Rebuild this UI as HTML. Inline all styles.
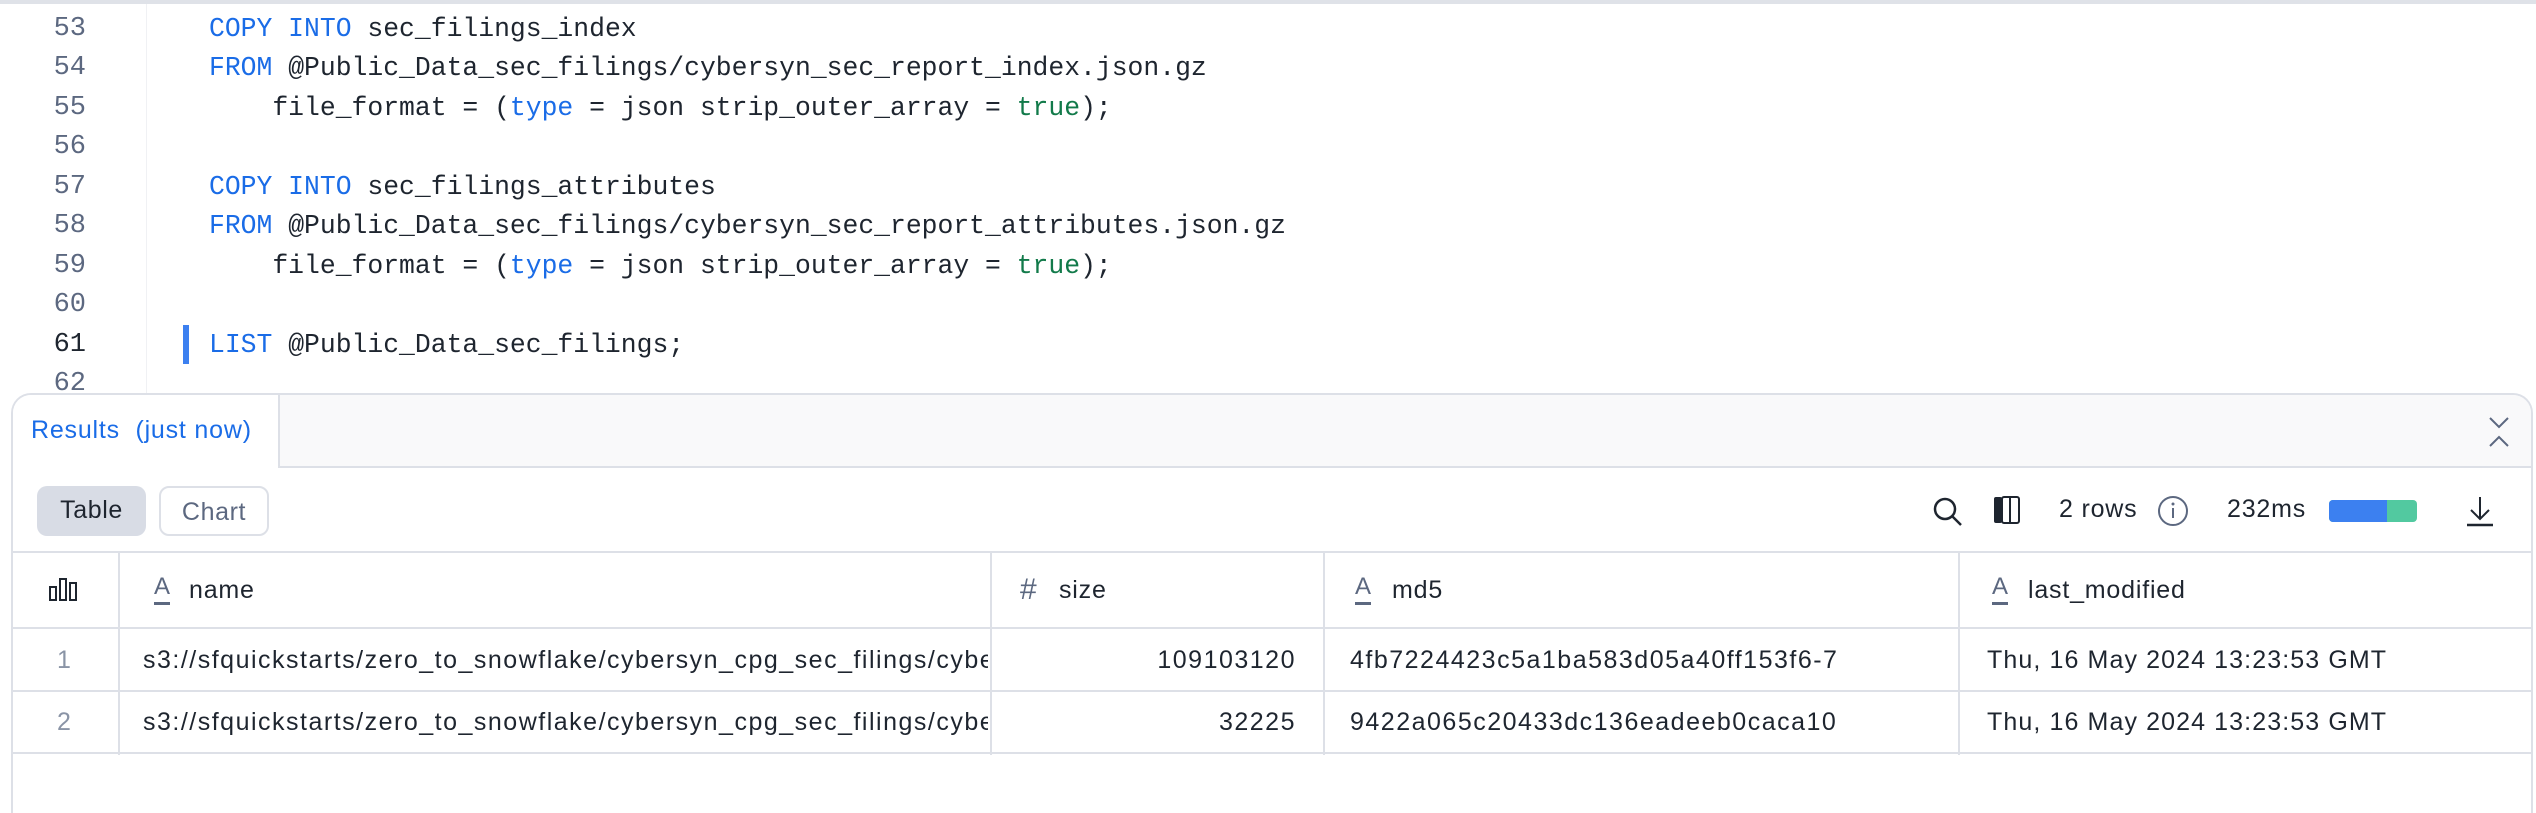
<!DOCTYPE html>
<html><head><meta charset="utf-8"><style>
*{margin:0;padding:0;box-sizing:border-box}
body{width:2536px;height:790px;background:#fff;position:relative;overflow:hidden;font-family:"Liberation Sans",sans-serif;color:#1e252f}
.top{position:absolute;left:0;top:0;width:2536px;height:4px;background:#dfe2e8}
.gut{position:absolute;left:146px;top:4px;width:1px;height:390px;background:#f0f1f4}
.ln{position:absolute;left:0;width:86px;text-align:right;font:27px "Liberation Mono",monospace;color:#5c6880}
.code{position:absolute;left:209px;font:26.4px "Liberation Mono",monospace;color:#1e252f;white-space:pre}
.k{color:#1a6ce7}.g{color:#127a4a}
.bar{position:absolute;left:183px;top:325px;width:6px;height:39px;background:#3c80f0}
.panel{position:absolute;left:11px;top:393px;width:2522px;height:420px;border:2px solid #dde0e7;border-bottom:none;border-radius:20px 20px 0 0;overflow:hidden}
.hdr{position:absolute;left:0;top:0;right:0;height:73px;background:#f9f9fa;border-bottom:2px solid #dde0e7}
.tab{position:absolute;left:0;top:0;width:267px;height:73px;background:#fff;border-right:2px solid #dde0e7;font-size:25px;letter-spacing:0.8px;color:#1a6ce7;padding:21px 0 0 18px;white-space:pre}
.btn{position:absolute;top:91px;height:50px;border-radius:10px;font-size:25px;letter-spacing:0.6px;text-align:center;line-height:48px}
.t{position:absolute;font-size:25px;letter-spacing:0.8px;white-space:pre}
.d{letter-spacing:1.5px}
.hl{position:absolute;left:0;right:0;height:2px;background:#dde0e7}
.vl{position:absolute;top:156px;height:204px;width:2px;background:#dde0e7}
.A{position:absolute;font-size:24px;color:#5c6880;border-bottom:3px solid #5c6880;line-height:24px;height:30px}
</style></head><body>
<div class="top"></div><div class="gut"></div>
<div class="ln" style="top:14px">53</div><div class="code" style="top:14px"><span class="k">COPY INTO</span> sec_filings_index</div>
<div class="ln" style="top:53px">54</div><div class="code" style="top:53px"><span class="k">FROM</span> @Public_Data_sec_filings/cybersyn_sec_report_index.json.gz</div>
<div class="ln" style="top:93px">55</div><div class="code" style="top:93px">    file_format = (<span class="k">type</span> = json strip_outer_array = <span class="g">true</span>);</div>
<div class="ln" style="top:132px">56</div>
<div class="ln" style="top:172px">57</div><div class="code" style="top:172px"><span class="k">COPY INTO</span> sec_filings_attributes</div>
<div class="ln" style="top:211px">58</div><div class="code" style="top:211px"><span class="k">FROM</span> @Public_Data_sec_filings/cybersyn_sec_report_attributes.json.gz</div>
<div class="ln" style="top:251px">59</div><div class="code" style="top:251px">    file_format = (<span class="k">type</span> = json strip_outer_array = <span class="g">true</span>);</div>
<div class="ln" style="top:290px">60</div>
<div class="ln" style="top:330px;color:#1e252f">61</div><div class="code" style="top:330px"><span class="k">LIST</span> @Public_Data_sec_filings;</div>
<div class="ln" style="top:369px">62</div>
<div class="bar"></div>
<div class="panel">
<div class="hdr"><div class="tab">Results  (just now)</div>
<svg style="position:absolute;right:20px;top:20px" width="24" height="34" viewBox="0 0 24 34"><path d="M3 3l9 9 9-9M3 31l9-9 9 9" fill="none" stroke="#5c6880" stroke-width="2"/></svg></div>
<div class="btn" style="left:24px;width:109px;background:#d8dce5;color:#1e252f">Table</div>
<div class="btn" style="left:146px;width:110px;border:2px solid #dde0e7;color:#5c6880">Chart</div>
<svg style="position:absolute;left:1918px;top:100px" width="34" height="34" viewBox="0 0 34 34"><circle cx="14" cy="14" r="10" fill="none" stroke="#1e252f" stroke-width="2.5"/><path d="M21 21l9 9" stroke="#1e252f" stroke-width="2.5"/></svg>
<svg style="position:absolute;left:1980px;top:101px" width="28" height="30" viewBox="0 0 28 30"><rect x="1" y="1" width="8" height="26" rx="2" fill="#1e252f"/><rect x="9" y="1" width="17" height="26" rx="2" fill="none" stroke="#1e252f" stroke-width="2"/><path d="M17 1v26" stroke="#1e252f" stroke-width="2"/></svg>
<div class="t" style="left:2046px;top:100px">2 rows</div>
<svg style="position:absolute;left:2144px;top:100px" width="32" height="32" viewBox="0 0 32 32"><circle cx="16" cy="16" r="14" fill="none" stroke="#5c6880" stroke-width="2"/><path d="M16 13v10" stroke="#5c6880" stroke-width="2"/><circle cx="16" cy="9" r="1.5" fill="#5c6880"/></svg>
<div class="t" style="left:2214px;top:100px">232ms</div>
<div style="position:absolute;left:2316px;top:105px;width:88px;height:22px;border-radius:4px;background:#52c9a0;overflow:hidden"><div style="width:58px;height:22px;background:#3c80f0"></div></div>
<svg style="position:absolute;left:2452px;top:100px" width="30" height="32" viewBox="0 0 30 32"><path d="M15 2v22M6 15l9 9 9-9" fill="none" stroke="#1e252f" stroke-width="2"/><path d="M2 30h26" stroke="#1e252f" stroke-width="2.5"/></svg>
<div class="hl" style="top:156px"></div><div class="hl" style="top:232px"></div><div class="hl" style="top:295px"></div><div class="hl" style="top:357px"></div>
<div class="vl" style="left:105px"></div><div class="vl" style="left:977px"></div><div class="vl" style="left:1310px"></div><div class="vl" style="left:1945px"></div>
<svg style="position:absolute;left:36px;top:182px" width="30" height="24" viewBox="0 0 30 24"><rect x="1" y="10" width="6" height="13" fill="none" stroke="#1e252f" stroke-width="2"/><rect x="11" y="2" width="6" height="21" fill="none" stroke="#1e252f" stroke-width="2"/><rect x="21" y="6" width="6" height="17" fill="none" stroke="#1e252f" stroke-width="2"/></svg>
<div class="A" style="left:141px;top:180px">A</div><div class="t" style="left:176px;top:181px">name</div>
<div class="t" style="left:1007px;top:178px;color:#5c6880;font-size:30px">#</div><div class="t" style="left:1046px;top:181px">size</div>
<div class="A" style="left:1342px;top:180px">A</div><div class="t" style="left:1379px;top:181px">md5</div>
<div class="A" style="left:1979px;top:180px">A</div><div class="t" style="left:2015px;top:181px">last_modified</div>
<div class="t" style="left:44px;top:251px;color:#8a94a6">1</div>
<div class="t d" style="left:130px;top:251px;width:845px;overflow:hidden">s3://sfquickstarts/zero_to_snowflake/cybersyn_cpg_sec_filings/cybersyn_sec_report_index.json.gz</div>
<div class="t d" style="left:980px;top:251px;width:303px;text-align:right">109103120</div>
<div class="t d" style="left:1337px;top:251px">4fb7224423c5a1ba583d05a40ff153f6-7</div>
<div class="t d" style="left:1974px;top:251px;letter-spacing:1.1px">Thu, 16 May 2024 13:23:53 GMT</div>
<div class="t" style="left:44px;top:313px;color:#8a94a6">2</div>
<div class="t d" style="left:130px;top:313px;width:845px;overflow:hidden">s3://sfquickstarts/zero_to_snowflake/cybersyn_cpg_sec_filings/cybersyn_sec_report_attributes.json.gz</div>
<div class="t d" style="left:980px;top:313px;width:303px;text-align:right">32225</div>
<div class="t d" style="left:1337px;top:313px">9422a065c20433dc136eadeeb0caca10</div>
<div class="t d" style="left:1974px;top:313px;letter-spacing:1.1px">Thu, 16 May 2024 13:23:53 GMT</div>
</div>
</body></html>
